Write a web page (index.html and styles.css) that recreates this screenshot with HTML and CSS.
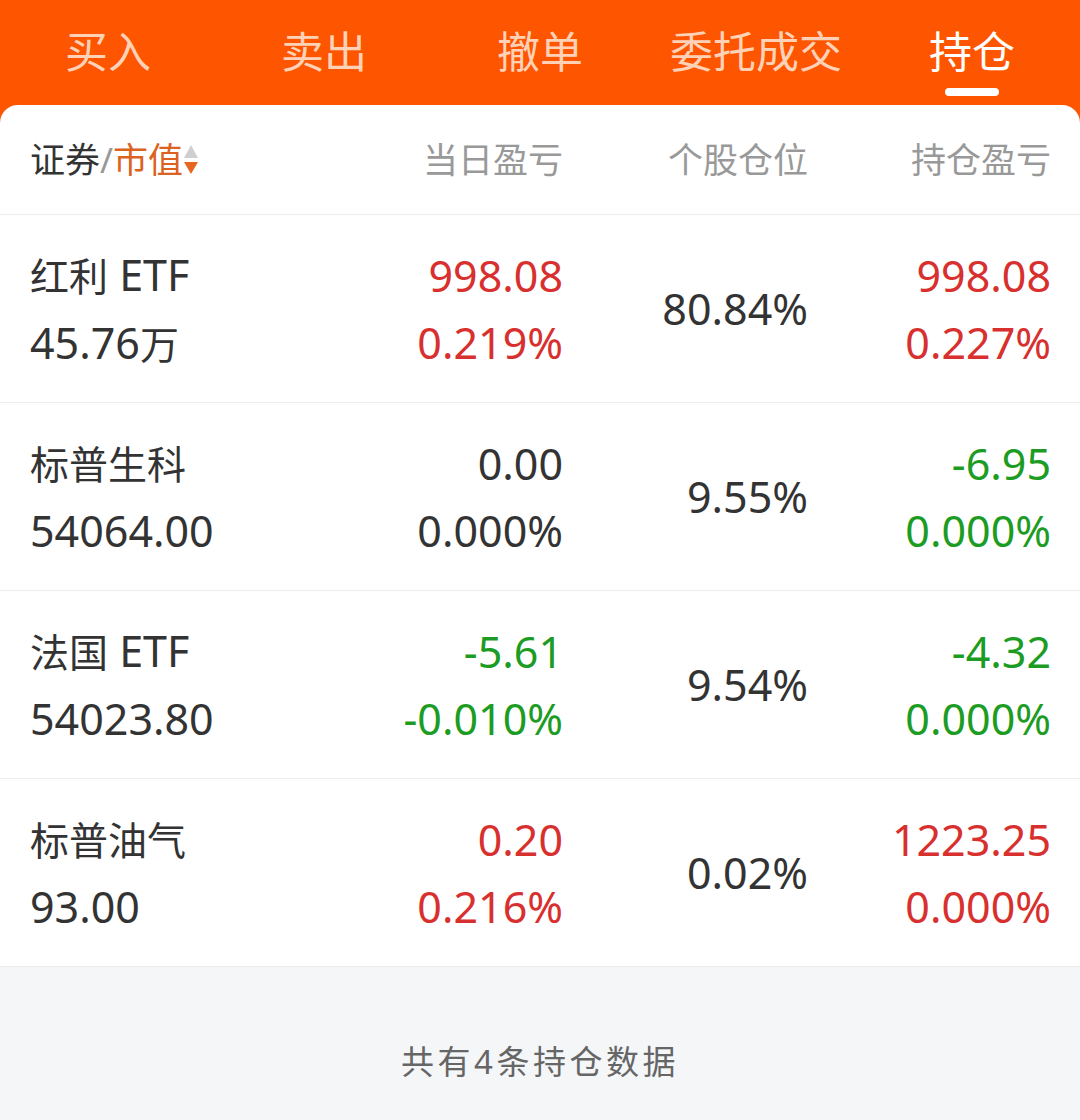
FILE: index.html
```html
<!DOCTYPE html>
<html lang="zh-CN">
<head>
  <meta charset="UTF-8" />
  <meta name="viewport" content="width=device-width, initial-scale=1" />
  <title>持仓</title>
  <link rel="stylesheet" href="styles.css">
</head>
<body>

  <nav class="tabs">
    <div class="tab">买入</div>
    <div class="tab">卖出</div>
    <div class="tab">撤单</div>
    <div class="tab">委托成交</div>
    <div class="tab active">持仓</div>
  </nav>

  <main class="main">
    <div class="card">
      <div class="row head">
        <div class="cell name">证券<span class="slash">/</span><span class="sort-key">市值</span><span class="sort"><i class="up"></i><i class="down"></i></span></div>
        <div class="cell">当日盈亏</div>
        <div class="cell">个股仓位</div>
        <div class="cell">持仓盈亏</div>
      </div>

      <div class="row">
        <div class="cell name"><span><em>红利</em> ETF</span><span>45.76<em>万</em></span></div>
        <div class="cell red"><span>998.08</span><span>0.219%</span></div>
        <div class="cell">80.84%</div>
        <div class="cell red"><span>998.08</span><span>0.227%</span></div>
      </div>

      <div class="row">
        <div class="cell name"><span><em>标普生科</em></span><span>54064.00</span></div>
        <div class="cell"><span>0.00</span><span>0.000%</span></div>
        <div class="cell">9.55%</div>
        <div class="cell green"><span>-6.95</span><span>0.000%</span></div>
      </div>

      <div class="row">
        <div class="cell name"><span><em>法国</em> ETF</span><span>54023.80</span></div>
        <div class="cell green"><span>-5.61</span><span>-0.010%</span></div>
        <div class="cell">9.54%</div>
        <div class="cell green"><span>-4.32</span><span>0.000%</span></div>
      </div>

      <div class="row">
        <div class="cell name"><span><em>标普油气</em></span><span>93.00</span></div>
        <div class="cell red"><span>0.20</span><span>0.216%</span></div>
        <div class="cell">0.02%</div>
        <div class="cell red"><span>1223.25</span><span>0.000%</span></div>
      </div>
    </div>

    <p class="summary">共有4条持仓数据</p>
  </main>

</body>
</html>
```

FILE: styles.css
```css
body {
  margin: 0;
  font-family: "Noto Sans", "Noto Sans CJK SC", sans-serif;
  color: #333;
  background: #f5f6f8;
}
.tabs {
  display: grid;
  grid-template-columns: repeat(5, 1fr);
  height: 105px;
  background: #fe5500;
}
.tab {
  display: flex;
  justify-content: center;
  padding-top: 24px;
  font-size: 43px;
  line-height: 56px;
  color: #ffd2b8;
}
.tab.active {
  position: relative;
  color: #fff;
}
.tab.active::after {
  content: "";
  position: absolute;
  left: 50%;
  top: 88px;
  width: 54px;
  height: 8px;
  margin-left: -27px;
  border-radius: 4px;
  background: #fff;
}
.main {
  background: linear-gradient(#fe5500 0 30px, #f5f6f8 30px);
}
.card {
  background: #fff;
  border-radius: 18px 18px 0 0;
}
.row {
  display: grid;
  grid-template-columns: 1fr 250px 245px 243px;
  align-items: center;
  height: 187px;
  padding: 0 29px 0 30px;
  border-bottom: 1px solid #ececec;
}
.row.head {
  height: 109px;
}
.cell {
  display: flex;
  flex-direction: column;
  align-items: flex-end;
  gap: 14px;
  font-size: 43px;
  line-height: 53px;
}
.cell em {
  font-style: normal;
  font-size: 39px;
}
.cell.name {
  align-items: flex-start;
}
.head .cell {
  flex-direction: row;
  align-items: center;
  justify-content: flex-end;
  gap: 0;
  font-size: 35px;
  color: #999;
}
.head .cell.name {
  justify-content: flex-start;
  color: #333;
}
.slash {
  color: #999;
}
.sort-key {
  color: #dc621f;
}
.sort {
  display: flex;
  flex-direction: column;
  gap: 4px;
  margin-left: 1px;
}
.sort i {
  width: 0;
  height: 0;
  border-left: 7px solid transparent;
  border-right: 7px solid transparent;
}
.sort .up {
  border-bottom: 13px solid #cfcfcf;
}
.sort .down {
  border-top: 12px solid #e8651f;
}
.red {
  color: #d8302e;
}
.green {
  color: #1c9c23;
}
.summary {
  margin: 0;
  padding: 72px 0 38px;
  text-align: center;
  font-size: 33px;
  line-height: 46px;
  letter-spacing: 3.5px;
  color: #666;
}
```
